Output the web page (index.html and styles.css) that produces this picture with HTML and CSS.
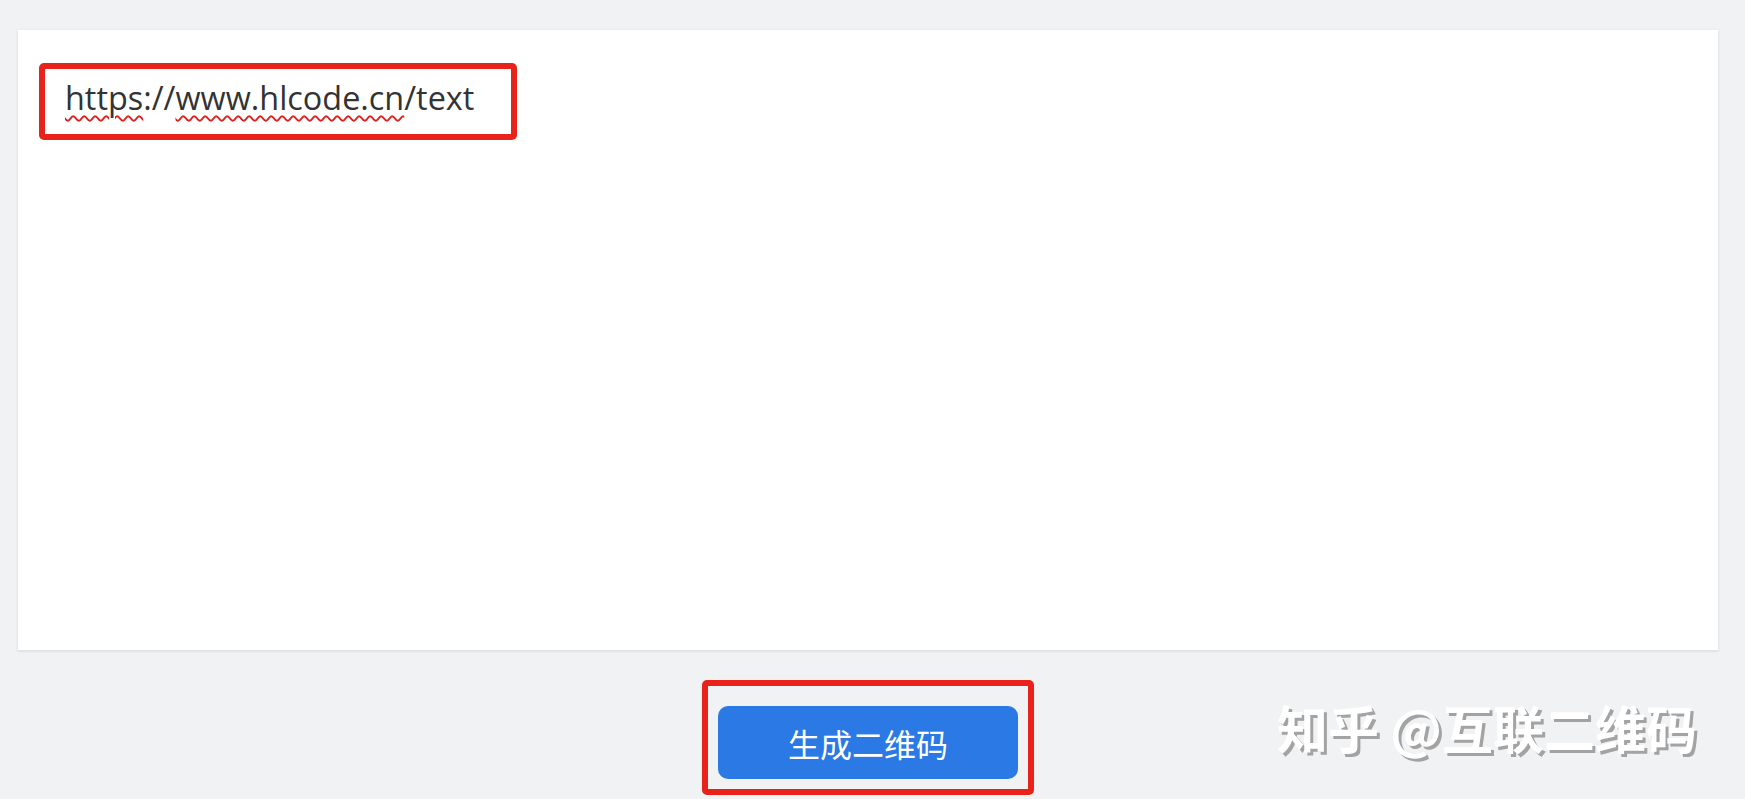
FILE: index.html
```html
<!DOCTYPE html>
<html lang="zh-CN">
<head>
  <meta charset="UTF-8">
  <title>生成二维码</title>
  <link rel="stylesheet" href="styles.css">
</head>
<body>

  <div class="card">
    <div class="mark">
      <div class="url"><span class="typo">https</span>://<span class="typo">www.hlcode.cn</span>/text</div>
    </div>
  </div>

  <div class="actions">
    <div class="mark mark-btn">
      <button class="gen-btn">生成二维码</button>
    </div>
  </div>

  <!-- marca de agua -->
  <div class="watermark">知乎 @互联二维码</div>

</body>
</html>
```

FILE: styles.css
```css
body {
  margin: 0;
  padding: 30px 27px 0 18px;
  background: #f1f2f4;
  font-family: "Open Sans", "Noto Sans CJK SC", sans-serif;
  height: 799px;
  box-sizing: border-box;
  overflow: hidden;
}

.card {
  height: 620px;
  background: white;
  box-shadow: 0 1px 3px rgba(0,0,0,0.12);
  padding: 33px 0 0 21px;
  box-sizing: border-box;
}

.mark {
  display: inline-block;
  border: 6px solid #e8231c;
  border-radius: 5px;
  box-sizing: border-box;
}

.card .mark {
  width: 478px;
  height: 77px;
  padding: 6px 0 0 20px;
}

.url {
  font-size: 32.4px;
  line-height: 44px;
  color: #333;
}

.typo {
  text-decoration: underline wavy #e02020;
  text-decoration-thickness: 2px;
  text-underline-offset: 5px;
}

.actions {
  display: flex;
  justify-content: center;
  margin-top: 30px;
}

.mark-btn {
  padding: 20px 10px 10px;
}

.gen-btn {
  display: block;
  width: 300px;
  height: 73px;
  border: none;
  border-radius: 10px;
  background: #2a79e4;
  color: white;
  font-family: "Noto Sans CJK SC", sans-serif;
  font-size: 32px;
  cursor: pointer;
}

.watermark {
  position: absolute;
  left: 1277px;
  top: 699px;
  font-family: "Noto Sans CJK SC", sans-serif;
  font-size: 51px;
  font-weight: 700;
  line-height: 56px;
  color: white;
  text-shadow: 3px 3px 0 #a3a3a3;
  white-space: nowrap;
}
```
